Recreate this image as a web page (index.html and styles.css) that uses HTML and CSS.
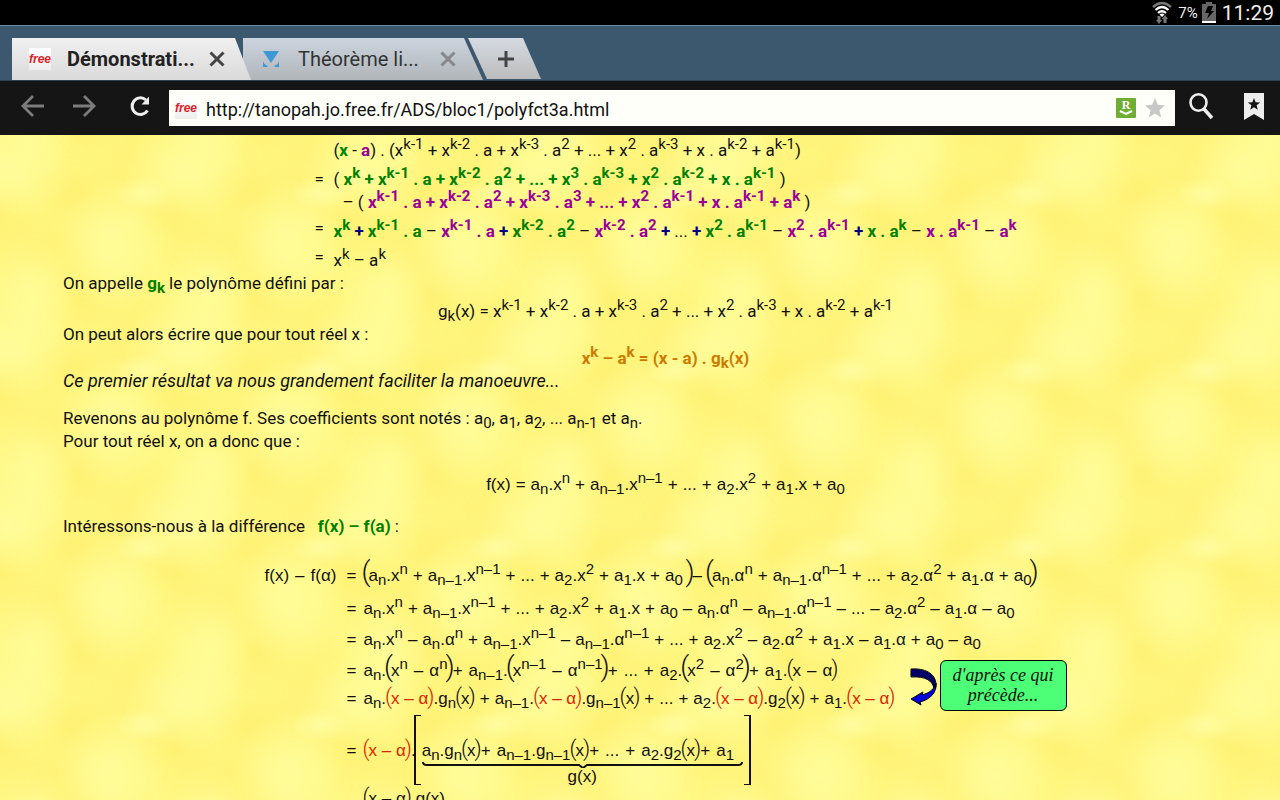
FILE: index.html
```html
<!DOCTYPE html>
<html lang="fr">
<head>
  <meta charset="UTF-8" />
  <meta name="viewport" content="width=device-width, initial-scale=1" />
  <title>Démonstration</title>
  <link rel="stylesheet" href="styles.css">
</head>
<body>
  <div class="status">
    <svg class="wifi" viewBox="0 0 20 23" width="20" height="23">
      <path d="M1 6 Q10 -2 19 6" fill="none" stroke="#777" stroke-width="2.4" />
      <path d="M3.500 9 Q10 3 16.500 9 M6 12 Q10 8.500 14 12" fill="none" stroke="#fff" stroke-width="2.200" />
      <path d="M7.500 13.500 Q10 11.500 12.500 13.500 L10 16z" fill="#fff" />
      <path d="M5.500 15h3v4h1.500l-3 4-3-4h1.500z M11.500 22h3v-4h1.500l-3-4-3 4h1.500z" fill="#777" />
    </svg>
    <span class="percent">7%</span>
    <svg class="battery" viewBox="0 0 14 21" width="14" height="21">
      <path d="M4 0h6v2h4v17H0V2h4z" fill="#666" />
      <path d="M0 19h14v2H0z" fill="#fff" />
      <path d="M6 4h5L9 9h3l-7 8 2-6H3z" fill="#000" />
    </svg>
    <span class="clock">11:29</span>
  </div>

  <nav class="tabs">
    <div class="tab active">
      <span class="favicon">free</span>
      <span class="tab-title">Démonstrati...</span>
      <button class="close" aria-label="Fermer">
        <svg viewBox="0 0 16 16" width="16" height="16"><path d="M1.500 1.500l13 13M14.500 1.500l-13 13" /></svg>
      </button>
    </div>
    <div class="tab">
      <svg class="logo" viewBox="0 0 18 18" width="18" height="18">
        <path d="M1 1h16L9 13z M1 11q1 4 5 5l-1 1H1z M17 11q-1 4-5 5l1 1h4z" fill="#3f97d3" />
      </svg>
      <span class="tab-title">Théorème li...</span>
      <button class="close" aria-label="Fermer">
        <svg viewBox="0 0 16 16" width="16" height="16"><path d="M1.500 1.500l13 13M14.500 1.500l-13 13" /></svg>
      </button>
    </div>
    <button class="new-tab" aria-label="Nouvel onglet">
      <svg viewBox="0 0 16 16" width="16" height="16"><path d="M8 0v16M0 8h16" /></svg>
    </button>
  </nav>

  <div class="toolbar">
    <button class="tool" aria-label="Retour">
      <svg viewBox="0 0 24 22" width="24" height="22"><path d="M12 1L2 11l10 10M2 11h21" fill="none" stroke="#7c7c7c" stroke-width="2.800" /></svg>
    </button>
    <button class="tool" aria-label="Suivant">
      <svg viewBox="0 0 24 22" width="24" height="22"><path d="M12 1l10 10-10 10M22 11H1" fill="none" stroke="#7c7c7c" stroke-width="2.800" /></svg>
    </button>
    <button class="tool reload" aria-label="Actualiser">
      <svg viewBox="0 0 22 22" width="22" height="22">
        <path d="M17 5A8.300 8.300 0 1 0 18.500 15.500" fill="none" stroke="#eee" stroke-width="3" />
        <path d="M20 1.500v8h-7.500z" fill="#eee" />
      </svg>
    </button>
    <div class="address">
      <span class="favicon">free</span>
      <input class="url" type="text" aria-label="Adresse" value="http://tanopah.jo.free.fr/ADS/bloc1/polyfct3a.html" />
      <svg viewBox="0 0 20 20" width="20" height="20">
        <rect width="20" height="20" rx="1" fill="#6fae35" />
        <text x="10" y="11" text-anchor="middle" class="reader">R</text>
        <path d="M4 13l6 3 6-3" fill="none" stroke="#fff" stroke-width="2" />
      </svg>
      <svg viewBox="0 0 20 20" width="20" height="20">
        <path d="M10 0l2.800 6.800 7.200.6-5.500 4.800 1.700 7.300L10 15.600 3.800 19.500l1.700-7.300L0 7.400l7.200-.6z" fill="#c8c8c8" />
      </svg>
    </div>
    <button class="tool search" aria-label="Rechercher">
      <svg viewBox="0 0 25 27" width="25" height="27">
        <ellipse cx="9.500" cy="9.500" rx="8" ry="8.200" fill="none" stroke="#eee" stroke-width="2.600" />
        <path d="M15 16l8 9" stroke="#eee" stroke-width="3.500" />
      </svg>
    </button>
    <button class="tool" aria-label="Favoris">
      <svg viewBox="0 0 20 27" width="20" height="27">
        <path d="M0 0h20v27l-10-6-10 6z" fill="#eee" />
        <path d="M10 5l1.600 4.200 4.600.2-3.600 2.900 1.200 4.400-3.800-2.500-3.800 2.500 1.200-4.400-3.600-2.900 4.600-.2z" fill="#151515" />
      </svg>
    </button>
  </div>

  <main class="page">
    <div class="proof">
      <span></span>
      <p>(<b class="green">x</b> - <b class="violet">a</b>) . (x<sup>k-1</sup> + x<sup>k-2</sup> . a + x<sup>k-3</sup> . a<sup>2</sup> + ... + x<sup>2</sup> . a<sup>k-3</sup> + x . a<sup>k-2</sup> + a<sup>k-1</sup>)</p>
      <span class="eq">=</span>
      <p class="tall">( <b class="green">x<sup>k</sup> + x<sup>k-1</sup> . a + x<sup>k-2</sup> . a<sup>2</sup> + ... + x<sup>3</sup> . a<sup>k-3</sup> + x<sup>2</sup> . a<sup>k-2</sup> + x . a<sup>k-1</sup></b> )</p>
      <span></span>
      <p class="indent">– ( <b class="violet">x<sup>k-1</sup> . a + x<sup>k-2</sup> . a<sup>2</sup> + x<sup>k-3</sup> . a<sup>3</sup> + ... + x<sup>2</sup> . a<sup>k-1</sup> + x . a<sup>k-1</sup> + a<sup>k</sup></b> )</p>
      <span class="eq middle">=</span>
      <p class="tall"><b class="green">x<sup>k</sup></b> <b class="navy">+</b> <b class="green">x<sup>k-1</sup> . a</b> – <b class="violet">x<sup>k-1</sup> . a</b> <b class="navy">+</b> <b class="green">x<sup>k-2</sup> . a<sup>2</sup></b> – <b class="violet">x<sup>k-2</sup> . a<sup>2</sup></b> <b class="navy">+</b> ... <b class="navy">+</b> <b class="green">x<sup>2</sup> . a<sup>k-1</sup></b> – <b class="violet">x<sup>2</sup> . a<sup>k-1</sup></b> <b class="navy">+</b> <b class="green">x . a<sup>k</sup></b> – <b class="violet">x . a<sup>k-1</sup></b> – <b class="violet">a<sup>k</sup></b></p>
      <span class="eq middle">=</span>
      <p class="tall">x<sup>k</sup> – a<sup>k</sup></p>
    </div>

    <p>On appelle <b class="green">g<sub>k</sub></b> le polynôme défini par :</p>
    <p class="center definition">g<sub>k</sub>(x) = x<sup>k-1</sup> + x<sup>k-2</sup> . a + x<sup>k-3</sup> . a<sup>2</sup> + ... + x<sup>2</sup> . a<sup>k-3</sup> + x . a<sup>k-2</sup> + a<sup>k-1</sup></p>
    <p>On peut alors écrire que pour tout réel x :</p>
    <p class="center result"><b class="orange">x<sup>k</sup> – a<sup>k</sup> = (x - a) . g<sub>k</sub>(x)</b></p>
    <p><em>Ce premier résultat va nous grandement faciliter la manoeuvre...</em></p>

    <p class="para">Revenons au polynôme f. Ses coefficients sont notés : a<sub>0</sub>, a<sub>1</sub>, a<sub>2</sub>, ... a<sub>n-1</sub> et a<sub>n</sub>.<br />
    Pour tout réel x, on a donc que :</p>

    <div class="math single">
      <div class="terms"><span>f(x)</span><span>=</span><span>a<sub>n</sub>.x<sup>n</sup></span><span>+</span><span>a<sub>n–1</sub>.x<sup>n–1</sup></span><span>+</span><span>...</span><span>+</span><span>a<sub>2</sub>.x<sup>2</sup></span><span>+</span><span>a<sub>1</sub>.x</span><span>+</span><span>a<sub>0</sub></span></div>
    </div>

    <p class="difference">Intéressons-nous à la différence &nbsp; <b class="green">f(x) – f(a)</b> :</p>

    <div class="math system">
      <div class="line first">
        <span class="left terms wide"><span>f(x)</span><span>–</span><span>f(α)</span></span><span class="equal">=</span>
        <div class="terms"><span><i class="big">(</i>a<sub>n</sub>.x<sup>n</sup></span><span>+</span><span>a<sub>n–1</sub>.x<sup>n–1</sup></span><span>+</span><span>...</span><span>+</span><span>a<sub>2</sub>.x<sup>2</sup></span><span>+</span><span>a<sub>1</sub>.x</span><span>+</span><span>a<sub>0</sub> <i class="big">)</i>–</span><span><i class="big">(</i>a<sub>n</sub>.α<sup>n</sup></span><span>+</span><span>a<sub>n–1</sub>.α<sup>n–1</sup></span><span>+</span><span>...</span><span>+</span><span>a<sub>2</sub>.α<sup>2</sup></span><span>+</span><span>a<sub>1</sub>.α</span><span>+</span><span>a<sub>0</sub><i class="big">)</i></span></div>
      </div>
      <div class="line">
        <span class="left"></span><span class="equal">=</span>
        <div class="terms"><span>a<sub>n</sub>.x<sup>n</sup></span><span>+</span><span>a<sub>n–1</sub>.x<sup>n–1</sup></span><span>+</span><span>...</span><span>+</span><span>a<sub>2</sub>.x<sup>2</sup></span><span>+</span><span>a<sub>1</sub>.x</span><span>+</span><span>a<sub>0</sub></span><span>–</span><span>a<sub>n</sub>.α<sup>n</sup></span><span>–</span><span>a<sub>n–1</sub>.α<sup>n–1</sup></span><span>–</span><span>...</span><span>–</span><span>a<sub>2</sub>.α<sup>2</sup></span><span>–</span><span>a<sub>1</sub>.α</span><span>–</span><span>a<sub>0</sub></span></div>
      </div>
      <div class="line">
        <span class="left"></span><span class="equal">=</span>
        <div class="terms"><span>a<sub>n</sub>.x<sup>n</sup></span><span>–</span><span>a<sub>n</sub>.α<sup>n</sup></span><span>+</span><span>a<sub>n–1</sub>.x<sup>n–1</sup></span><span>–</span><span>a<sub>n–1</sub>.α<sup>n–1</sup></span><span>+</span><span>...</span><span>+</span><span>a<sub>2</sub>.x<sup>2</sup></span><span>–</span><span>a<sub>2</sub>.α<sup>2</sup></span><span>+</span><span>a<sub>1</sub>.x</span><span>–</span><span>a<sub>1</sub>.α</span><span>+</span><span>a<sub>0</sub></span><span>–</span><span>a<sub>0</sub></span></div>
      </div>
      <div class="cited">
        <div class="lines">
          <div class="line">
            <span class="left"></span><span class="equal">=</span>
            <div class="terms wide"><span>a<sub>n</sub>.<i class="big">(</i>x<sup>n</sup></span><span>–</span><span>α<sup>n</sup><i class="big">)</i>+</span><span>a<sub>n–1</sub>.<i class="big">(</i>x<sup>n–1</sup></span><span>–</span><span>α<sup>n–1</sup><i class="big">)</i>+</span><span>...</span><span>+</span><span>a<sub>2</sub>.<i class="big">(</i>x<sup>2</sup></span><span>–</span><span>α<sup>2</sup><i class="big">)</i>+</span><span>a<sub>1</sub>.<i class="mid">(</i>x</span><span>–</span><span>α<i class="mid">)</i></span></div>
          </div>
          <div class="line">
            <span class="left"></span><span class="equal">=</span>
            <div class="terms"><span>a<sub>n</sub>.<span class="red"><i class="mid">(</i>x – α<i class="mid">)</i></span>.g<sub>n</sub><i class="mid">(</i>x<i class="mid">)</i></span><span>+</span><span>a<sub>n–1</sub>.<span class="red"><i class="mid">(</i>x – α<i class="mid">)</i></span>.g<sub>n–1</sub><i class="mid">(</i>x<i class="mid">)</i></span><span>+</span><span>...</span><span>+</span><span>a<sub>2</sub>.<span class="red"><i class="mid">(</i>x – α<i class="mid">)</i></span>.g<sub>2</sub><i class="mid">(</i>x<i class="mid">)</i></span><span>+</span><span>a<sub>1</sub>.<span class="red"><i class="mid">(</i>x – α<i class="mid">)</i></span></span></div>
          </div>
        </div>
        <svg class="arrow" viewBox="0 0 27 39" width="27" height="39">
          <path d="M1 1C14 0 26 5 26 17C26 19 25 20 24 21C23 13 16 8 1 9z" fill="#000066" stroke="#000" />
          <path d="M26 15C27 24 21 31 10 34L11 37L1 31L13 24L12 27C20 25 25 20 26 15z" fill="#0000dd" stroke="#000" />
        </svg>
        <aside class="note">d'après ce qui précède...</aside>
      </div>
      <div class="line factor">
        <span class="left"></span><span class="equal">=</span>
        <span><span class="red"><i class="mid">(</i>x – α<i class="mid">)</i></span>.</span>
        <div class="bracket">
          <div class="terms wide"><span>a<sub>n</sub>.g<sub>n</sub><i class="mid">(</i>x<i class="mid">)</i>+</span><span>a<sub>n–1</sub>.g<sub>n–1</sub><i class="mid">(</i>x<i class="mid">)</i>+</span><span>...</span><span>+</span><span>a<sub>2</sub>.g<sub>2</sub><i class="mid">(</i>x<i class="mid">)</i>+</span><span>a<sub>1</sub></span></div>
          <svg class="underbrace" viewBox="0 0 321 6" preserveAspectRatio="none" height="6"><path d="M1 0q0 3 4 3h152l4 3 4-3h151q4 0 4-3" /></svg>
          <div class="name">g(x)</div>
        </div>
      </div>
      <div class="line last">
        <span class="left"></span><span class="equal"></span>
        <span><i class="mid">(</i>x – α<i class="mid">)</i>.g(x)</span>
      </div>
    </div>
  </main>
</body>
</html>
```
FILE: styles.css
```css
* {
  box-sizing: border-box;
}
body {
  margin: 0;
  height: 100vh;
  display: flex;
  flex-direction: column;
  overflow: hidden;
  background: #000;
  font-family: Roboto, sans-serif;
}
button {
  border: none;
  padding: 0;
  background: none;
  cursor: pointer;
}
svg {
  display: block;
  flex: none;
}

/* status bar */
.status {
  height: 25px;
  padding-right: 6px;
  display: flex;
  align-items: center;
  justify-content: flex-end;
  color: #eee;
  flex: none;
}
.percent {
  margin: 0 4px 0 6px;
  font-size: 15px;
}
.clock {
  margin-left: 6px;
  font-size: 21px;
}

/* tabs */
.tabs {
  height: 56px;
  padding: 12px 12px 0;
  display: flex;
  background: #3c586f;
  border-top: 1px solid #6f8ba3;
  border-bottom: 1px solid #2c4354;
  flex: none;
}
.tab {
  width: 240px;
  height: 42px;
  padding-left: 19px;
  display: flex;
  align-items: center;
  color: #333;
  background: linear-gradient(#ccd4de, #b0b5b9);
  clip-path: polygon(0 0, 221px 0, 100% 100%, 0 100%);
}
.tab.active {
  width: 239px;
  margin-right: -8px;
  padding-left: 17px;
  z-index: 1;
  color: #222;
  background: linear-gradient(#f0f0f0, #dadada);
  clip-path: polygon(0 0, 223px 0, 100% 100%, 0 100%);
}
.tab-title {
  width: 124px;
  margin-left: 18px;
  font-size: 20px;
  white-space: nowrap;
}
.active .tab-title {
  margin-left: 16px;
  font-weight: bold;
}
.close {
  margin-left: 18px;
  stroke: #888;
  stroke-width: 3;
}
.active .close {
  stroke: #444;
}
.new-tab {
  width: 73px;
  height: 41px;
  margin-left: -15px;
  padding-left: 30px;
  background: linear-gradient(#d5dae2, #bcbcbc);
  clip-path: polygon(0 0, 55px 0, 100% 100%, 19px 100%);
  stroke: #444;
  stroke-width: 3;
}
.favicon {
  width: 22px;
  height: 22px;
  background: linear-gradient(#fff, #eee);
  color: #d8232a;
  font: italic bold 12px/22px "Liberation Sans", sans-serif;
  text-align: center;
  flex: none;
}

/* toolbar */
.toolbar {
  height: 54px;
  padding: 9px 16px 9px 21px;
  display: flex;
  align-items: center;
  background: #151515;
  flex: none;
}
.tool {
  margin: 0 27px 4px 0;
}
.reload {
  margin: 0 18px 4px 6px;
}
.address {
  height: 36px;
  padding: 0 10px 0 6px;
  display: flex;
  align-items: center;
  gap: 9px;
  background: #fffffa;
  flex: 1;
}
.url {
  flex: 1;
  min-width: 0;
  border: none;
  padding: 2px 0 0;
  background: none;
  color: #111;
  font: 18px Roboto, sans-serif;
}
.reader {
  font: bold 12px "Liberation Serif", serif;
  fill: #fff;
}
.search {
  margin: 0 30px 4px 14px;
}
.toolbar .tool:last-child {
  margin-right: 0;
}

/* web page */
.page {
  flex: 1;
  min-height: 0;
  overflow: hidden;
  padding: 4px 12px 0 63px;
  color: #111;
  font-size: 17px;
  line-height: 23px;
  background:
    radial-gradient(ellipse 30px 16px, #fffca0, transparent) 55px -30px,
    radial-gradient(ellipse 54px 68px, #fffc9a, transparent) 23px 22px,
    radial-gradient(ellipse 64px 50px, #fffc9a, transparent) 97px -53px,
    radial-gradient(ellipse 44px 64px, #fffc98, transparent) 120px 72px,
    radial-gradient(ellipse 44px 54px, #fff173, transparent) 172px 72px,
    radial-gradient(ellipse 64px 44px, #fff173, transparent) 167px -30px,
    radial-gradient(ellipse 60px 44px, #fff173, transparent) 127px 27px,
    radial-gradient(ellipse 40px 40px, #fff172, transparent) 87px -10px,
    radial-gradient(ellipse 50px 70px, #fff276, transparent) 45px -66px,
    #fff884;
  background-size: 177px 177px;
}
p {
  margin: 0;
}
em {
  font-size: 18px;
  line-height: 0;
}
sub, sup {
  font-size: 15px;
  line-height: 0;
}
.center {
  text-align: center;
}
.tall {
  padding-top: 6px;
}
.definition {
  padding-top: 5px;
}
.result {
  padding-top: 1px;
}
.green {
  color: #008000;
}
.violet {
  color: #990099;
}
.navy {
  color: #000080;
}
.orange {
  color: #cc7a00;
}
.proof {
  display: grid;
  grid-template-columns: 19px auto;
  justify-content: center;
  white-space: nowrap;
}
.eq {
  align-self: end;
}
.eq.middle {
  align-self: center;
}
.indent {
  padding-left: 9px;
}
.para {
  margin-top: 14px;
}
.difference {
  margin-top: 19px;
}

/* formulas */
.math {
  font-family: "Liberation Sans", sans-serif;
  white-space: nowrap;
}
.math i {
  font-family: Roboto, sans-serif;
  font-style: normal;
  font-weight: 300;
  line-height: 0;
}
.big {
  font-size: 28px;
  margin: 0 -2px;
}
.mid {
  font-size: 22px;
  margin: 0 -1px;
}
.red {
  color: #e02000;
}
.terms {
  display: flex;
  gap: 5px;
}
.terms.wide {
  gap: 6px;
}
.single {
  margin-top: 20px;
  display: flex;
  justify-content: center;
}
.system {
  width: 802px;
  margin: 26px auto 0;
}
.line {
  display: flex;
  align-items: baseline;
  margin-bottom: 8px;
}
.line.first {
  margin-bottom: 10px;
}
.left {
  width: 82px;
  flex: none;
}
.equal {
  width: 17px;
  flex: none;
}
.cited {
  display: flex;
  align-items: flex-start;
}
.cited .line {
  margin-bottom: 5px;
}
.arrow {
  margin: 9px 3px 0 auto;
}
.note {
  width: 127px;
  height: 51px;
  margin-top: 1px;
  padding-top: 4px;
  border: 1px solid #000;
  border-radius: 6px;
  background: #4cff77;
  font: italic 18px/20px "Liberation Serif", serif;
  text-align: center;
  white-space: normal;
  flex: none;
}
.line.factor {
  margin-bottom: 2px;
}
.bracket {
  padding: 24px 8px 0 6px;
  position: relative;
}
/* square brackets on both sides */
.bracket::before,
.bracket::after {
  content: "";
  position: absolute;
  top: 0;
  bottom: 0;
  left: -2px;
  width: 5px;
  border: 1px solid #111;
  border-left-width: 2px;
  border-right: none;
}
.bracket::after {
  left: auto;
  right: 0;
  border: 1px solid #111;
  border-right-width: 2px;
  border-left: none;
}
.underbrace {
  width: 100%;
  fill: none;
  stroke: #111;
  stroke-width: 2;
}
.name {
  line-height: 17px;
  text-align: center;
}
```
